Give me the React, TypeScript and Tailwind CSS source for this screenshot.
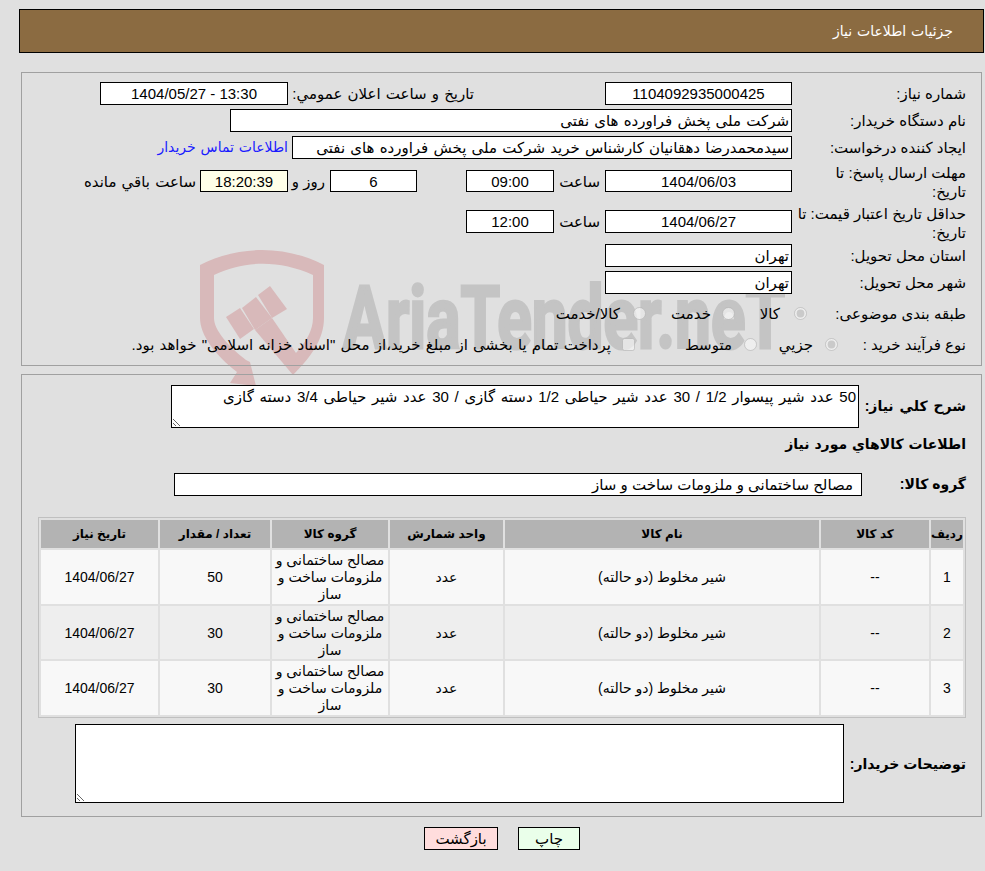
const rows = [
  { id: "1", qty: "50", bg: "bg-[#f8f8f8]", height: "h-[54px]" },
  { id: "2", qty: "30", bg: "bg-[#eeeeee]", height: "h-[53px]" },
  { id: "3", qty: "30", bg: "bg-[#f8f8f8]", height: "h-[54px]" },
]

const headers = [
  { title: "ردیف", width: "w-[32px]" },
  { title: "کد کالا", width: "w-[108px]" },
  { title: "نام کالا", width: "w-[314px]" },
  { title: "واحد شمارش", width: "w-[113px]" },
  { title: "گروه کالا", width: "w-[116px]" },
  { title: "تعداد / مقدار", width: "w-[110px]" },
  { title: "تاریخ نیاز", width: "w-[117px]" },
]

function Box({ className, children }: { className: string; children?: React.ReactNode }) {
  return (
    <div className={`flex shrink-0 items-center justify-center border border-black bg-white whitespace-nowrap ${className}`}>
      {children}
    </div>
  )
}

function Watermark() {
  return (
    <svg className="pointer-events-none absolute top-0 left-0" width="985" height="871" viewBox="0 0 985 871">
      <g fill="#d8b9ba">
        <path d="M200 265 C240 245 285 245 324 265 L324 318 C324 340 310 358 293 375 L293 353 L296 353 C306 342 313 330 313 318 L313 275 C280 260 245 260 214 275 L214 318 C214 330 228 346 246 360 L250 362 L256 386 L230 383 L237 372 C215 355 200 335 200 318 Z" />
        <path d="M226 317 L240 308 L254 329 L240 339 Z" />
        <path d="M242 308 L256 297 L272 318 L255 330 Z" />
        <path d="M258 295 L270 286 L287 309 L272 318 Z" />
        <path d="M255 330 L272 318 L296 353 L293 375 Z" />
      </g>
      <text x="343" y="348" className="[direction:ltr]" fontFamily="Roboto, sans-serif" fontWeight="700" fontSize="88" fill="#c4c4c4" stroke="#c4c4c4" strokeWidth="3" textLength="442" lengthAdjust="spacingAndGlyphs">
        AriaTender.neT
      </text>
    </svg>
  )
}

export default function App() {
  return (
    <div dir="rtl" className="relative min-h-[871px] w-[985px] overflow-hidden bg-[#e0e0e0] pt-[9px] font-['Liberation_Sans','DejaVu_Sans',sans-serif] text-[15px] leading-[19px] text-black">
      <Watermark />
      <div className="relative">
        <div className="ml-[19px] mr-px flex h-[44px] items-center border border-black bg-[#8b6b41] pr-[30px] text-[14px] text-white [word-spacing:1px]">
          جزئیات اطلاعات نیاز
        </div>

        <div className="mt-[19px] ml-[21px] mr-[3px] h-[294px] border border-[#a0a0a0] pt-[9px] pr-[15px]">
          <div className="flex h-[23px] items-center">
            <div className="w-[174px] shrink-0">شماره نیاز:</div>
            <Box className="h-[23px] w-[187px]">1104092935000425</Box>
            <div className="mr-[131px] w-[186px] shrink-0 whitespace-nowrap [word-spacing:1px]">تاریخ و ساعت اعلان عمومي:</div>
            <Box className="h-[23px] w-[188px]"><span dir="ltr">1404/05/27 - 13:30</span></Box>
          </div>
          <div className="mt-[4px] flex h-[23px] items-center">
            <div className="w-[174px] shrink-0">نام دستگاه خریدار:</div>
            <Box className="h-[23px] w-[562px] !justify-start pr-[2px] [word-spacing:1px]">شرکت ملی پخش فراورده های نفتی</Box>
          </div>
          <div className="mt-[4px] flex h-[23px] items-center">
            <div className="w-[174px] shrink-0">ایجاد کننده درخواست:</div>
            <Box className="h-[23px] w-[500px] !justify-start pr-[2px] [word-spacing:1px]">سیدمحمدرضا دهقانیان کارشناس خرید شرکت ملی پخش فراورده های نفتی</Box>
            <a className="mr-[4px] text-[14px] whitespace-nowrap text-[#1a1aff] [word-spacing:1px]">اطلاعات تماس خریدار</a>
          </div>
          <div className="mt-[11px] flex h-[22px] items-center">
            <div className="mt-[2px] w-[174px] shrink-0 pl-[20px]">مهلت ارسال پاسخ: تا تاریخ:</div>
            <Box className="h-[22px] w-[187px]">1404/06/03</Box>
            <div className="mr-[5px] w-[46px] shrink-0">ساعت</div>
            <Box className="h-[22px] w-[88px]">09:00</Box>
            <div className="w-[49px] shrink-0" />
            <Box className="h-[22px] w-[87px]">6</Box>
            <div className="mr-[5px] w-[37px] shrink-0">روز و</div>
            <Box className="h-[22px] w-[88px] !bg-[#ffffe8]">18:20:39</Box>
            <div className="mr-[4px] whitespace-nowrap [word-spacing:1px]">ساعت باقي مانده</div>
          </div>
          <div className="mt-[18px] flex h-[23px] items-center">
            <div className="mt-[3px] w-[174px] shrink-0 pl-[2px]">حداقل تاریخ اعتبار قیمت: تا تاریخ:</div>
            <Box className="h-[23px] w-[187px]">1404/06/27</Box>
            <div className="mr-[5px] w-[46px] shrink-0">ساعت</div>
            <Box className="h-[23px] w-[88px]">12:00</Box>
          </div>
          <div className="mt-[11px] flex h-[23px] items-center">
            <div className="w-[174px] shrink-0">استان محل تحویل:</div>
            <Box className="h-[23px] w-[187px] !justify-start pr-[2px]">تهران</Box>
          </div>
          <div className="mt-[4px] flex h-[23px] items-center">
            <div className="w-[174px] shrink-0">شهر محل تحویل:</div>
            <Box className="h-[23px] w-[187px] !justify-start pr-[2px]">تهران</Box>
          </div>
          <div className="mt-[8px] flex h-[22px] items-center">
            <div className="w-[159px] shrink-0 whitespace-nowrap">طبقه بندی موضوعی:</div>
            <div className="flex w-[72px] shrink-0 items-center gap-[14px]">
              <input type="radio" disabled checked readOnly className="m-0 h-[13px] w-[13px]" />
              <span>کالا</span>
            </div>
            <div className="flex w-[89px] shrink-0 items-center gap-[11px]">
              <input type="radio" disabled readOnly className="m-0 h-[13px] w-[13px]" />
              <span>خدمت</span>
            </div>
            <div className="flex items-center gap-[13px]">
              <input type="radio" disabled readOnly className="m-0 h-[13px] w-[13px]" />
              <span>کالا/خدمت</span>
            </div>
          </div>
          <div className="mt-[9px] flex h-[22px] items-center">
            <div className="w-[128px] shrink-0 whitespace-nowrap">نوع فرآیند خرید :</div>
            <div className="flex w-[81px] shrink-0 items-center gap-[12px]">
              <input type="radio" disabled checked readOnly className="m-0 h-[13px] w-[13px]" />
              <span>جزيي</span>
            </div>
            <div className="flex w-[122px] shrink-0 items-center gap-[12px]">
              <input type="radio" disabled readOnly className="m-0 h-[13px] w-[13px]" />
              <span>متوسط</span>
            </div>
            <div className="flex items-center gap-[11px] whitespace-nowrap [word-spacing:1px]">
              <input type="checkbox" disabled readOnly className="m-0 h-[13px] w-[13px]" />
              <span>پرداخت تمام یا بخشی از مبلغ خرید،از محل "اسناد خزانه اسلامی" خواهد بود.</span>
            </div>
          </div>
        </div>

        <div className="mt-[8px] ml-[21px] mr-[3px] h-[443px] border border-[#a0a0a0] pt-[10px] pr-[15px]">
          <div className="flex items-center">
            <div className="w-[107px] shrink-0 text-[14px] font-bold [word-spacing:2px]">شرح کلي نیاز:</div>
            <textarea
              readOnly
              value="50 عدد شیر پیسوار 1/2 / 30 عدد شیر حیاطی 1/2 دسته گازی / 30 عدد شیر حیاطی 3/4 دسته گازی"
              className="block h-[43px] w-[688px] border border-black bg-white px-[2px] pt-px text-[15px] leading-[19px] outline-none [word-spacing:1.5px]"
            />
          </div>
          <div className="mt-[7px] text-[14px] leading-[19px] font-bold [word-spacing:1px]">اطلاعات کالاهاي مورد نياز</div>
          <div className="mt-[19px] flex items-center">
            <div className="w-[104px] shrink-0 text-[14px] font-bold">گروه کالا:</div>
            <Box className="h-[23px] w-[688px] !justify-start pr-[8px]">مصالح ساختمانی و ملزومات ساخت و ساز</Box>
          </div>
          <table className="mt-[21px] w-[928px] table-fixed border-separate border-spacing-[2px] border border-[#c0c0c0] text-center text-[14px]">
            <thead>
              <tr>
                {headers.map((h) => (
                  <th key={h.title} className={`${h.width} h-[28px] bg-[#b3b3b3] p-0 pt-px text-[12px] font-bold whitespace-nowrap`}>
                    {h.title}
                  </th>
                ))}
              </tr>
            </thead>
            <tbody>
              {rows.map((row) => (
                <tr key={row.id} className={row.bg}>
                  <td className={`${row.height} p-0 pt-px`}>{row.id}</td>
                  <td className="p-0 pt-px">--</td>
                  <td className="p-0 pt-px">شیر مخلوط (دو حالته)</td>
                  <td className="p-0 pt-px">عدد</td>
                  <td className="p-0 pt-px leading-[17px]">مصالح ساختمانی و ملزومات ساخت و ساز</td>
                  <td className="p-0 pt-px">{row.qty}</td>
                  <td className="p-0 pt-px">1404/06/27</td>
                </tr>
              ))}
            </tbody>
          </table>
          <div className="mt-[6px] flex items-center">
            <div className="w-[122px] shrink-0 pt-px text-[14px] font-bold">توضیحات خریدار:</div>
            <textarea readOnly className="block h-[79px] w-[769px] border border-black bg-white outline-none" />
          </div>
        </div>

        <div className="mt-[10px] flex justify-start gap-[20px] pr-[405px]">
          <button className="h-[23px] w-[62px] border border-black bg-[#eaffea]">چاپ</button>
          <button className="h-[23px] w-[74px] border border-black bg-[#ffdddd]">بازگشت</button>
        </div>
      </div>
    </div>
  )
}
